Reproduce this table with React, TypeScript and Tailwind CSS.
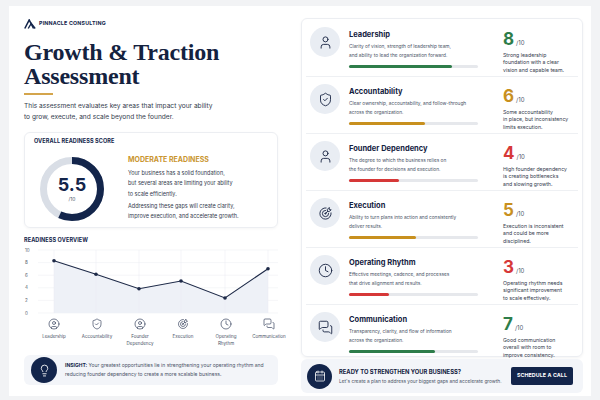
import React from 'react';
import { User, CircleUser, ShieldCheck, Clock, MessagesSquare, Lightbulb, CalendarDays } from 'lucide-react';
import { TbTargetArrow } from 'react-icons/tb';

type IconType = React.ComponentType<{ size?: number; strokeWidth?: number; color?: string; className?: string }>;

const areas = [
  {
    title: 'Leadership',
    desc: ['Clarity of vision, strength of leadership team,', 'and ability to lead the organization forward.'],
    score: 8,
    bar: 80,
    scoreClass: 'text-[#2e7d4a]',
    barClass: 'bg-[#2e7d4a]',
    note: ['Strong leadership', 'foundation with a clear', 'vision and capable team.'],
    icon: User as IconType,
  },
  {
    title: 'Accountability',
    desc: ['Clear ownership, accountability, and follow-through', 'across the organization.'],
    score: 6,
    bar: 59,
    scoreClass: 'text-[#c8901e]',
    barClass: 'bg-[#c8901e]',
    note: ['Some accountability', 'in place, but inconsistency', 'limits execution.'],
    icon: ShieldCheck as IconType,
  },
  {
    title: 'Founder Dependency',
    desc: ['The degree to which the business relies on', 'the founder for decisions and execution.'],
    score: 4,
    bar: 39,
    scoreClass: 'text-[#d63838]',
    barClass: 'bg-[#d63838]',
    note: ['High founder dependency', 'is creating bottlenecks', 'and slowing growth.'],
    icon: User as IconType,
  },
  {
    title: 'Execution',
    desc: ['Ability to turn plans into action and consistently', 'deliver results.'],
    score: 5,
    bar: 52,
    scoreClass: 'text-[#c8901e]',
    barClass: 'bg-[#c8901e]',
    note: ['Execution is inconsistent', 'and could be more', 'disciplined.'],
    icon: TbTargetArrow as unknown as IconType,
  },
  {
    title: 'Operating Rhythm',
    desc: ['Effective meetings, cadence, and processes', 'that drive alignment and results.'],
    score: 3,
    bar: 31,
    scoreClass: 'text-[#d63838]',
    barClass: 'bg-[#d63838]',
    note: ['Operating rhythm needs', 'significant improvement', 'to scale effectively.'],
    icon: Clock as IconType,
  },
  {
    title: 'Communication',
    desc: ['Transparency, clarity, and flow of information', 'across the organization.'],
    score: 7,
    bar: 67,
    scoreClass: 'text-[#2e7d4a]',
    barClass: 'bg-[#2e7d4a]',
    note: ['Good communication', 'overall with room to', 'improve consistency.'],
    icon: MessagesSquare as IconType,
  },
];

const chartIcons: { label: string[]; icon: IconType }[] = [
  { label: ['Leadership'], icon: CircleUser as IconType },
  { label: ['Accountability'], icon: ShieldCheck as IconType },
  { label: ['Founder', 'Dependency'], icon: CircleUser as IconType },
  { label: ['Execution'], icon: TbTargetArrow as unknown as IconType },
  { label: ['Operating', 'Rhythm'], icon: Clock as IconType },
  { label: ['Communication'], icon: MessagesSquare as IconType },
];

const points = [
  [30, 14.7],
  [72, 28.3],
  [115, 42.7],
  [157, 35],
  [201, 52],
  [244, 22.7],
];

function Donut() {
  const r = 28.5;
  const c = 2 * Math.PI * r;
  return (
    <div className="relative h-[64px] w-[64px] shrink-0">
      <svg width="64" height="64" viewBox="0 0 64 64" className="-rotate-90">
        <circle cx="32" cy="32" r={r} fill="none" stroke="#d9dee6" strokeWidth="7" />
        <circle
          cx="32"
          cy="32"
          r={r}
          fill="none"
          stroke="#13254b"
          strokeWidth="7"
          strokeDasharray={`${c * 0.57} ${c}`}
        />
      </svg>
      <div className="absolute inset-0 flex flex-col items-center justify-center">
        <span className="text-[18px] font-bold leading-[18px]">5.5</span>
        <span className="mt-[2px] text-[5px] leading-[6px] text-[#4b5468]">/10</span>
      </div>
    </div>
  );
}

function Chart() {
  const grid = [4, 16.6, 29.2, 41.8, 54.4, 67];
  const labels = ['10', '8', '6', '4', '2', '0'];
  const line = points.map(([x, y]) => `${x},${y}`).join(' ');
  return (
    <svg width="254" height="72" viewBox="0 0 254 72" className="mt-[2px] block">
      {grid.map((y, i) => (
        <g key={y}>
          <line x1="14" x2="254" y1={y} y2={y} stroke="#eef0f3" strokeWidth="0.6" />
          <text x="1" y={y + 1.6} fontSize="4.5" fill="#555d6e">
            {labels[i]}
          </text>
        </g>
      ))}
      <path d={`M30,67 L${line.replace(/ /g, ' L')} L244,67 Z`} fill="#eef1f7" />
      {points.map(([x]) => (
        <line key={x} x1={x} x2={x} y1="4" y2="67" stroke="#e8ebf1" strokeWidth="0.5" />
      ))}
      <polyline points={line} fill="none" stroke="#1e2a48" strokeWidth="1.1" />
      {points.map(([x, y]) => (
        <circle key={x} cx={x} cy={y} r="1.8" fill="#1e2a48" />
      ))}
    </svg>
  );
}

function LeftColumn() {
  return (
    <div className="ml-[15px] w-[254px] shrink-0 pt-[13px]">
      <div className="flex h-[10px] items-center gap-[3px]">
        <svg width="12" height="10" viewBox="0 0 12 10">
          <path d="M0.8 9.5 L5.2 1 L9.6 9.5" fill="none" stroke="#13254b" strokeWidth="1.6" strokeLinejoin="miter" />
          <path d="M4.2 9.5 L7.3 4.4 L11.2 9.5" fill="none" stroke="#13254b" strokeWidth="1.4" />
        </svg>
        <span className="text-[5.3px] font-bold leading-none tracking-[0.2px]">PINNACLE CONSULTING</span>
      </div>
      <h1 className="mt-[11px] font-['Liberation_Serif',serif] text-[24px] font-bold leading-[24px] tracking-[-0.2px] text-[#14223f]">
        Growth &amp; Traction
        <br />
        Assessment
      </h1>
      <div className="mt-[5px] h-[2px] w-[29px] bg-[#d4a54c]" />
      <p className="mt-[6px] text-[6.6px] leading-[11px] text-[#333b4d]">
        This assessment evaluates key areas that impact your ability
        <br />
        to grow, execute, and scale beyond the founder.
      </p>

      <div className="mt-[9px] h-[96px] rounded-[6px] border border-[#eceef2] px-[9px] pt-[5px] shadow-[0_1px_3px_rgba(0,0,0,0.04)]">
        <div className="text-[5.5px] font-bold leading-[7px] tracking-[0.1px]">OVERALL READINESS SCORE</div>
        <div className="mt-[12px] flex">
          <div className="ml-[6px]">
            <Donut />
          </div>
          <div className="-mt-[2px] ml-[24px]">
            <div className="text-[7px] font-bold leading-[9px] text-[#c9952f]">MODERATE READINESS</div>
            <p className="mt-[4px] text-[5.5px] leading-[10.3px] text-[#333b4d]">
              Your business has a solid foundation,
              <br />
              but several areas are limiting your ability
              <br />
              to scale efficiently.
            </p>
            <p className="mt-[2px] text-[5.5px] leading-[10.3px] text-[#333b4d]">
              Addressing these gaps will create clarity,
              <br />
              improve execution, and accelerate growth.
            </p>
          </div>
        </div>
      </div>

      <div className="mt-[8px] text-[5.5px] font-bold leading-[8px] tracking-[0.1px]">READINESS OVERVIEW</div>
      <Chart />
      <div className="ml-[8.5px] flex w-[257px]">
        {chartIcons.map(({ label, icon: Icon }) => (
          <div key={label.join(' ')} className="flex w-[43px] shrink-0 flex-col items-center">
            <Icon size={12} strokeWidth={1.4} color="#3a4560" />
            <div className="mt-[3px] text-center text-[4.5px] leading-[7px] text-[#4b5468]">
              {label.map((l) => (
                <div key={l}>{l}</div>
              ))}
            </div>
          </div>
        ))}
      </div>

      <div className="mt-[8px] flex h-[30px] items-center rounded-[6px] bg-[#f3f5f9] pl-[7px]">
        <div className="flex h-[26px] w-[26px] shrink-0 items-center justify-center rounded-full bg-[#13254b]">
          <Lightbulb size={13} strokeWidth={1.6} color="#ffffff" />
        </div>
        <p className="ml-[8px] text-[5px] leading-[9.5px] text-[#4b5468]">
          <span className="font-bold text-[#13254b]">INSIGHT:</span> Your greatest opportunities lie in strengthening your operating rhythm and
          <br />
          reducing founder dependency to create a more scalable business.
        </p>
      </div>
    </div>
  );
}

function RightColumn() {
  return (
    <div className="ml-[23px] w-[282px] shrink-0 pt-[12px]">
      <div className="rounded-[6px] border border-[#eceef2] px-[4px] pt-[1px] shadow-[0_1px_3px_rgba(0,0,0,0.05)]">
        {areas.map((a, i) => {
          const Icon = a.icon;
          const last = i === areas.length - 1;
          return (
            <div
              key={a.title}
              className={last ? 'flex h-[51px] pl-[4px] pt-[7px]' : 'flex h-[57px] border-b border-[#eef0f3] pl-[4px] pt-[7px]'}
            >
              <div className="flex h-[30px] w-[30px] shrink-0 items-center justify-center rounded-full bg-[#e9edf3]">
                <Icon size={15} strokeWidth={1.5} color="#1e2a48" />
              </div>
              <div className="ml-[9px] w-[129px] shrink-0">
                <div className="mt-[3px] text-[7.5px] font-bold leading-[10px] text-[#14223f]">{a.title}</div>
                <div className="mt-[2px] text-[4.8px] leading-[8.5px] text-[#4b5468]">
                  {a.desc.map((d) => (
                    <div key={d}>{d}</div>
                  ))}
                </div>
                <div className="mt-[6px] h-[3px] w-full rounded-full bg-[#e6e8ec]">
                  <div className={`h-full rounded-full ${a.barClass}`} style={{ width: `${a.bar}%` }} />
                </div>
              </div>
              <div className="ml-[25px]">
                <div className="mt-[3.5px] flex items-baseline">
                  <span className={`text-[17px] font-bold leading-[17px] ${a.scoreClass}`}>{a.score}</span>
                  <span className="ml-[2px] text-[6px] text-[#4b5468]">/10</span>
                </div>
                <div className="mt-[4px] text-[5.2px] leading-[7.7px] text-[#333b4d]">
                  {a.note.map((n) => (
                    <div key={n}>{n}</div>
                  ))}
                </div>
              </div>
            </div>
          );
        })}
      </div>

      <div className="mt-[2px] flex h-[34px] items-center rounded-[6px] bg-[#f3f5f9] pl-[6px] pr-[10px]">
        <div className="flex h-[25px] w-[25px] shrink-0 items-center justify-center rounded-full bg-[#13254b]">
          <CalendarDays size={12} strokeWidth={1.6} color="#ffffff" />
        </div>
        <div className="ml-[7px] flex-1">
          <div className="text-[5.8px] font-bold leading-[8px] text-[#14223f]">READY TO STRENGTHEN YOUR BUSINESS?</div>
          <div className="mt-[2px] text-[4.8px] leading-[7px] text-[#4b5468]">
            Let's create a plan to address your biggest gaps and accelerate growth.
          </div>
        </div>
        <div className="flex h-[18px] w-[62px] items-center justify-center rounded-[2px] bg-[#13254b] text-[5.3px] font-bold tracking-[0.1px] text-white">
          SCHEDULE A CALL
        </div>
      </div>
    </div>
  );
}

export default function App() {
  return (
    <div className="min-h-screen bg-[#f2f3f5] px-[9px] pt-[6px] font-['Inter',sans-serif] text-[#13254b]">
      <div className="flex h-[390px] bg-white">
        <LeftColumn />
        <RightColumn />
      </div>
    </div>
  );
}
